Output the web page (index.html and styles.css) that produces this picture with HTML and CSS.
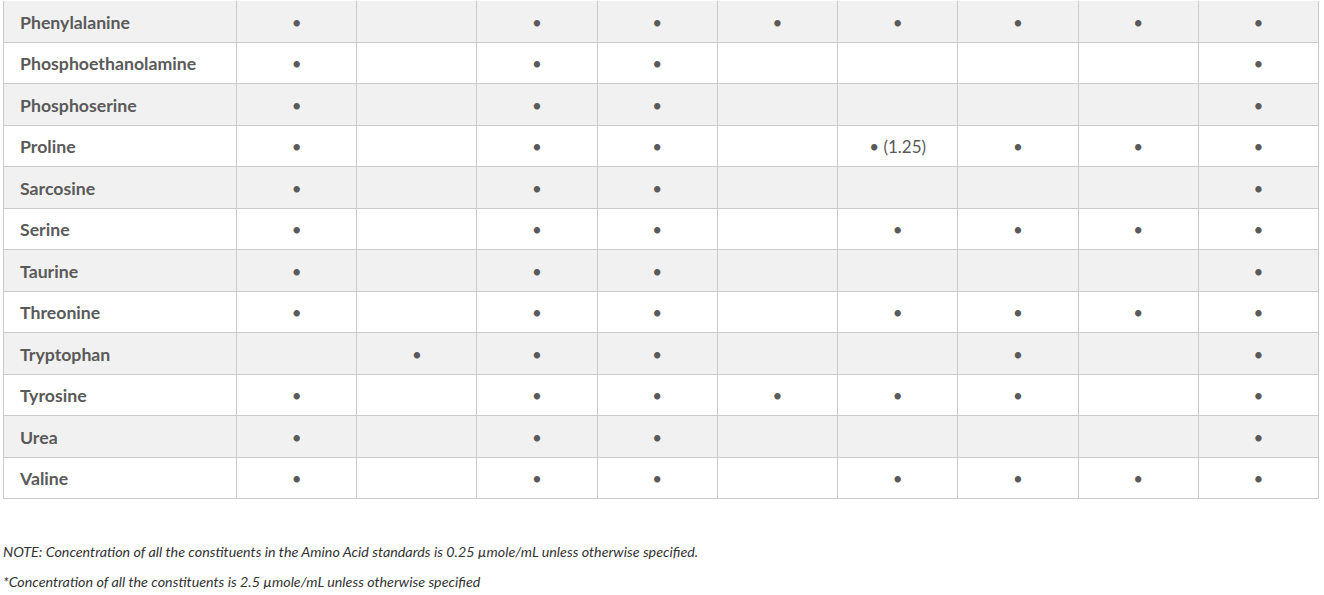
FILE: index.html
```html
<!DOCTYPE html>
<html>
<head>
<meta charset="utf-8">
<link rel="stylesheet" href="styles.css">
</head>
<body>
<div class="page">
<table class="aa">
<colgroup><col class="c-name"><col><col><col><col><col><col><col><col><col></colgroup>
<tbody>
<tr><th>Phenylalanine</th><td>•</td><td></td><td>•</td><td>•</td><td>•</td><td>•</td><td>•</td><td>•</td><td>•</td></tr>
<tr><th>Phosphoethanolamine</th><td>•</td><td></td><td>•</td><td>•</td><td></td><td></td><td></td><td></td><td>•</td></tr>
<tr><th>Phosphoserine</th><td>•</td><td></td><td>•</td><td>•</td><td></td><td></td><td></td><td></td><td>•</td></tr>
<tr><th>Proline</th><td>•</td><td></td><td>•</td><td>•</td><td></td><td>• (1.25)</td><td>•</td><td>•</td><td>•</td></tr>
<tr><th>Sarcosine</th><td>•</td><td></td><td>•</td><td>•</td><td></td><td></td><td></td><td></td><td>•</td></tr>
<tr><th>Serine</th><td>•</td><td></td><td>•</td><td>•</td><td></td><td>•</td><td>•</td><td>•</td><td>•</td></tr>
<tr><th>Taurine</th><td>•</td><td></td><td>•</td><td>•</td><td></td><td></td><td></td><td></td><td>•</td></tr>
<tr><th>Threonine</th><td>•</td><td></td><td>•</td><td>•</td><td></td><td>•</td><td>•</td><td>•</td><td>•</td></tr>
<tr><th>Tryptophan</th><td></td><td>•</td><td>•</td><td>•</td><td></td><td></td><td>•</td><td></td><td>•</td></tr>
<tr><th>Tyrosine</th><td>•</td><td></td><td>•</td><td>•</td><td>•</td><td>•</td><td>•</td><td></td><td>•</td></tr>
<tr><th>Urea</th><td>•</td><td></td><td>•</td><td>•</td><td></td><td></td><td></td><td></td><td>•</td></tr>
<tr><th>Valine</th><td>•</td><td></td><td>•</td><td>•</td><td></td><td>•</td><td>•</td><td>•</td><td>•</td></tr>
</tbody>
</table>
<p class="note">NOTE: Concentration of all the constituents in the Amino Acid standards is 0.25 µmole/mL unless otherwise specified.</p>
<p class="note">*Concentration of all the constituents is 2.5 µmole/mL unless otherwise specified</p>
</div>
</body>
</html>
```
FILE: styles.css
```css
html, body { margin: 0; padding: 0; background: #fff; }
body { font-family: Lato, "Open Sans", sans-serif; color: #555; }
.page { padding: 0 5px 0 3px; margin-top: 0.5px; }
.aa {
  width: 1316px;
  border-collapse: collapse;
  table-layout: fixed;
  border: 1px solid #cacaca;
  border-top: 0;
}
.c-name { width: 233px; }
.aa tr { height: 41.5px; }
.aa tr:nth-child(odd) { background: #f1f1f1; }
.aa tr:nth-child(even) { background: #fff; }
.aa th, .aa td {
  border: 1px solid #cacaca;
  padding: 2px 0 0;
  vertical-align: middle;
}
.aa tr:first-child > th, .aa tr:first-child > td { border-top: 0; }
.aa th {
  text-align: left;
  padding-left: 16px;
  font-weight: 700;
  font-size: 17.7px;
  color: #5a5a5a;
}
.aa td {
  text-align: center;
  font-size: 17px;
  color: #5a5a5a;
}
.note {
  margin: 0;
  font-style: italic;
  font-size: 14.3px;
  color: #333;
  line-height: 30px;
}
.aa + .note { margin-top: 38px; }
```
